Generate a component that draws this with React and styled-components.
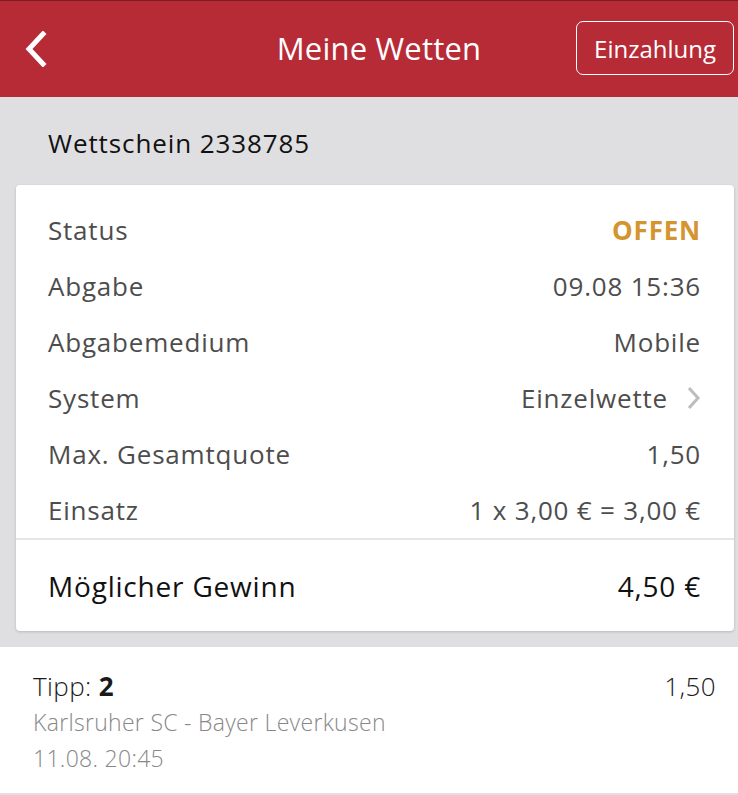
import React from "react";
import styled, { createGlobalStyle } from "styled-components";

const GlobalStyle = createGlobalStyle`
  body {
    margin: 0;
    background: #ffffff;
    font-family: "Open Sans", "Noto Sans", sans-serif;
    -webkit-font-smoothing: antialiased;
  }
`;

const details = [
  { label: "Status", value: "OFFEN", status: true },
  { label: "Abgabe", value: "09.08 15:36" },
  { label: "Abgabemedium", value: "Mobile" },
  { label: "System", value: "Einzelwette", link: true },
  { label: "Max. Gesamtquote", value: "1,50" },
  { label: "Einsatz", value: "1 x 3,00 € = 3,00 €" }
];

const ChevronLeft = () => (
  <svg width="24" height="36" viewBox="0 0 24 36">
    <path d="M19 3 L5 18 L19 33" fill="none" stroke="#fff" strokeWidth="5" strokeLinecap="square" />
  </svg>
);

const ChevronRight = () => (
  <svg width="15" height="24" viewBox="0 0 15 24">
    <path d="M3 2 L12 12 L3 22" fill="none" stroke="#bdbdbd" strokeWidth="3" />
  </svg>
);

export default function App() {
  return (
    <>
      <GlobalStyle />
      <Header>
        <BackButton aria-label="Zurück">
          <ChevronLeft />
        </BackButton>
        <Title>Meine Wetten</Title>
        <DepositButton>Einzahlung</DepositButton>
      </Header>
      <Body>
        <TicketTitle>Wettschein 2338785</TicketTitle>
        <Card>
          <DetailList>
            {details.map(item => (
              <DetailRow key={item.label}>
                <span>{item.label}</span>
                <DetailValue $status={item.status}>
                  {item.value}
                  {item.link && <ChevronRight />}
                </DetailValue>
              </DetailRow>
            ))}
          </DetailList>
          <TotalRow>
            <span>Möglicher Gewinn</span>
            <span>4,50 €</span>
          </TotalRow>
        </Card>
      </Body>
      <Tip>
        <TipHead>
          <span>
            Tipp: <b>2</b>
          </span>
          <span>1,50</span>
        </TipHead>
        <TipMeta>Karlsruher SC - Bayer Leverkusen</TipMeta>
        <TipMeta>11.08. 20:45</TipMeta>
      </Tip>
    </>
  );
}

const Header = styled.header`
  display: grid;
  grid-template-columns: 1fr auto 1fr;
  align-items: center;
  height: 96px;
  padding: 0 4px 0 24px;
  background: #b72b37;
  border-top: 1px solid #7d1c25;
  color: #fff;
`;

const BackButton = styled.button`
  justify-self: start;
  display: flex;
  padding: 0;
  border: 0;
  background: none;
`;

const Title = styled.h1`
  margin: 0 0 3px;
  font-size: 31px;
  font-weight: 400;
  letter-spacing: 0.2px;
`;

const DepositButton = styled.button`
  justify-self: end;
  height: 54px;
  margin-bottom: 2px;
  padding: 0 17px;
  border: 1.5px solid #fff;
  border-radius: 7px;
  background: transparent;
  color: #fff;
  font-family: inherit;
  font-size: 24px;
`;

const Body = styled.main`
  padding: 0 4px 16px 16px;
  background: #dfdfe1;
`;

const TicketTitle = styled.div`
  display: flex;
  align-items: center;
  height: 88px;
  padding: 4px 0 0 32px;
  box-sizing: border-box;
  font-size: 26px;
  letter-spacing: 0.9px;
  color: #111;
`;

const Card = styled.section`
  border-radius: 4px;
  background: #fff;
  box-shadow: 0 1px 3px rgba(0, 0, 0, 0.18);
`;

const DetailList = styled.div`
  padding: 17px 33px 0 32px;
  border-bottom: 2px solid #e6e6e6;
`;

const DetailRow = styled.div`
  display: flex;
  align-items: center;
  justify-content: space-between;
  height: 56px;
  font-size: 26px;
  letter-spacing: 0.8px;
  color: #4d4d4d;
`;

const DetailValue = styled.span`
  display: flex;
  align-items: center;
  gap: 18px;
  color: ${p => (p.$status ? "#d4952f" : "#4d4d4d")};
  font-weight: ${p => (p.$status ? 700 : 400)};
`;

const TotalRow = styled.div`
  display: flex;
  align-items: center;
  justify-content: space-between;
  height: 91px;
  padding: 0 33px 0 32px;
  font-size: 28px;
  letter-spacing: 0.8px;
  color: #111;
`;

const Tip = styled.section`
  padding: 21px 22px 17px 33px;
  border-bottom: 2px solid #e0e0e0;
`;

const TipHead = styled.div`
  display: flex;
  justify-content: space-between;
  line-height: 36px;
  font-size: 26px;
  font-weight: 300;
  letter-spacing: 0.4px;
  color: #1a1a1a;

  b {
    font-weight: 700;
  }
`;

const TipMeta = styled.div`
  line-height: 36px;
  font-size: 23px;
  font-weight: 300;
  letter-spacing: 0.3px;
  color: #888;
`;
